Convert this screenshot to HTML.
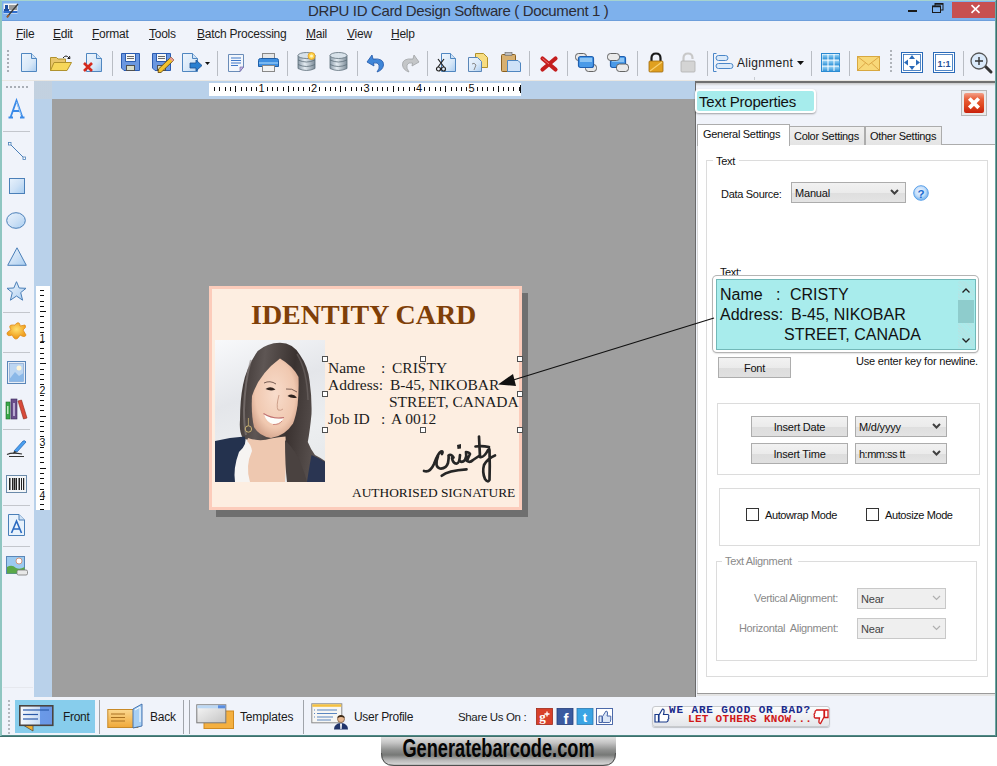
<!DOCTYPE html>
<html><head><meta charset="utf-8">
<style>
*{margin:0;padding:0;box-sizing:border-box}
html,body{width:997px;height:766px;overflow:hidden;background:#fff;font-family:"Liberation Sans",sans-serif;color:#000}
.a{position:absolute}
svg{position:absolute;overflow:visible}
.mi{position:absolute;top:28px;font-size:12px;line-height:12px;color:#1e1e1e;letter-spacing:-0.25px;white-space:pre}
.mi u{text-decoration:underline;text-underline-offset:1px}
.sep{position:absolute;top:51px;width:1px;height:25px;background:#b9bdc4}
.lsep{position:absolute;left:3px;width:27px;height:1px;background:#c3c6cc}
.handle{position:absolute;width:6px;height:6px;border:1px solid #505050;background:#fff}
.ct{position:absolute;font-family:"Liberation Serif",serif;font-size:15.5px;line-height:15px;color:#1c1c1c;white-space:pre}
.pt{position:absolute;font-size:11px;line-height:11px;color:#111;white-space:pre;margin-top:1px}
.btn{position:absolute;border:1px solid #adadad;background:linear-gradient(#f2f2f2 0%,#ebebeb 50%,#dddddd 51%,#e0e0e0 100%);font-size:11px;color:#111;text-align:center;letter-spacing:-0.2px;padding-top:1px}
.cmb{position:absolute;border:1px solid #acacac;background:linear-gradient(#f1f1f1 0%,#ebebeb 50%,#dedede 51%,#e4e4e4 100%);font-size:11px;color:#111;padding-left:3px;letter-spacing:-0.2px;padding-top:1px}
.grp{position:absolute;border:1px solid #dcdcdc}
.st{position:absolute;font-size:12px;line-height:12px;color:#1a1a1a;white-space:pre}
</style></head><body>
<!-- window frame -->
<div class="a" style="left:0;top:0;width:997px;height:737px;background:#f0f3fa;border-left:2px solid #8fc6c1;border-right:2px solid #6aa6a2;border-top:1px solid #a6d3cf;border-bottom:2px solid #4f8a86"></div>
<!-- title bar -->
<div class="a" style="left:2px;top:1px;width:993px;height:20px;background:#7eb1ec"></div>
<svg style="left:3px;top:3px" width="16" height="15" viewBox="0 0 16 15">
<rect x="0.5" y="0.5" width="14" height="10" fill="#f4f4f4"/>
<rect x="2" y="2" width="3" height="4" fill="#1f4fa0"/><rect x="1" y="6" width="5" height="2" fill="#1f4fa0"/>
<rect x="6" y="2" width="8" height="5" fill="#9a9a9a"/>
<rect x="0.5" y="8" width="14" height="2" fill="#2f6fd0"/>
<line x1="15" y1="1" x2="4" y2="14" stroke="#3a3a3a" stroke-width="1.3"/>
<line x1="6" y1="12" x2="4" y2="14.5" stroke="#a06030" stroke-width="2"/>
</svg>
<div class="a" style="left:308px;top:2px;font-size:15px;line-height:17px;letter-spacing:-0.36px;color:#2c2c34;white-space:pre">DRPU ID Card Design Software ( Document 1 )</div>
<div class="a" style="left:908px;top:10px;width:9px;height:2px;background:#1a1a1a"></div>
<svg style="left:932px;top:3px" width="12" height="10" viewBox="0 0 12 10"><rect x="3" y="0.5" width="8" height="6.5" fill="none" stroke="#1a1a1a" stroke-width="1"/><rect x="0.5" y="3" width="8" height="6.5" fill="#7eb1ec" stroke="#1a1a1a" stroke-width="1"/><line x1="0.5" y1="3.5" x2="8.5" y2="3.5" stroke="#1a1a1a" stroke-width="1.5"/><line x1="3" y1="1" x2="11" y2="1" stroke="#1a1a1a" stroke-width="1.5"/></svg>
<div class="a" style="left:952px;top:2px;width:43px;height:16px;background:#c75050"></div><div class="a" style="left:2px;top:20px;width:993px;height:1px;background:#6d9edb"></div>
<svg style="left:971px;top:5px" width="9" height="8" viewBox="0 0 9 8"><path d="M0.5 0.2 L8.5 7.8 M8.5 0.2 L0.5 7.8" stroke="#fff" stroke-width="1.6"/></svg>
<!-- menu -->
<div class="mi" style="left:16px"><u>F</u>ile</div>
<div class="mi" style="left:53px"><u>E</u>dit</div>
<div class="mi" style="left:92px"><u>F</u>ormat</div>
<div class="mi" style="left:149px"><u>T</u>ools</div>
<div class="mi" style="left:197px"><u>B</u>atch Processing</div>
<div class="mi" style="left:306px"><u>M</u>ail</div>
<div class="mi" style="left:347px"><u>V</u>iew</div>
<div class="mi" style="left:391px"><u>H</u>elp</div>
<!-- toolbar -->
<div class="a" style="left:2px;top:80px;width:993px;height:1px;background:#e8e6e2"></div>
<svg style="left:7px;top:50px" width="3" height="22"><g fill="#a9aeb6"><rect y="0" width="2" height="2"/><rect y="4" width="2" height="2"/><rect y="8" width="2" height="2"/><rect y="12" width="2" height="2"/><rect y="16" width="2" height="2"/><rect y="20" width="2" height="2"/></g></svg>
<!-- new doc -->
<svg style="left:21px;top:53px" width="17" height="19" viewBox="0 0 17 19"><defs><linearGradient id="gd" x1="0" y1="0" x2="1" y2="1"><stop offset="0" stop-color="#eef5fd"/><stop offset="0.6" stop-color="#d8e8f8"/><stop offset="1" stop-color="#a9cbef"/></linearGradient></defs><path d="M0.5 0.5 H10.5 L15.5 5.5 V18.5 H0.5 Z" fill="url(#gd)" stroke="#4f86c0"/><path d="M10.5 0.5 V5.5 H15.5" fill="#cfe2f6" stroke="#4f86c0"/></svg>
<!-- open -->
<svg style="left:50px;top:55px" width="23" height="17" viewBox="0 0 23 17"><path d="M0.5 2.5 H6.5 L8 4 H15.5 V15.5 H0.5 Z" fill="#e9c66a" stroke="#b0922e"/><path d="M0.5 15.5 L4 7.5 H21.5 L17 15.5 Z" fill="#f7d75a" stroke="#b0922e"/><path d="M13 3 Q16 -1 19 3" fill="none" stroke="#222" stroke-width="1"/><path d="M17.5 3.5 L20 3.5 L19.5 1" fill="none" stroke="#222" stroke-width="1"/></svg>
<!-- close doc -->
<svg style="left:83px;top:53px" width="20" height="19" viewBox="0 0 20 19"><path d="M3.5 0.5 H13.5 L18.5 5.5 V18.5 H3.5 Z" fill="url(#gd)" stroke="#4f86c0"/><path d="M13.5 0.5 V5.5 H18.5" fill="#cfe2f6" stroke="#4f86c0"/><path d="M1 10 L9 18 M9 10 L1 18" stroke="#d42a1e" stroke-width="2.6"/></svg>
<div class="sep" style="left:112px"></div>
<!-- save -->
<svg style="left:121px;top:53px" width="19" height="18" viewBox="0 0 19 18"><path d="M0.5 0.5 H18.5 V17.5 H3 L0.5 15 Z" fill="#6b97e0" stroke="#2b5cb0"/><rect x="5" y="1" width="9" height="7" fill="#f8f8f6"/><path d="M4.5 1 V8.5 H14.5 V1" fill="none" stroke="#2b5cb0" stroke-width="1"/><line x1="6" y1="3.5" x2="13" y2="3.5" stroke="#6a6a6a"/><line x1="6" y1="5.5" x2="13" y2="5.5" stroke="#6a6a6a"/><rect x="5.5" y="12.5" width="8" height="5" fill="#d8dcc8" stroke="#505050" stroke-width="1"/></svg>
<!-- save as -->
<svg style="left:152px;top:53px" width="23" height="20" viewBox="0 0 23 20"><path d="M0.5 0.5 H18.5 V17.5 H3 L0.5 15 Z" fill="#6b97e0" stroke="#2b5cb0"/><rect x="5" y="1" width="9" height="7" fill="#f8f8f6"/><path d="M4.5 1 V8.5 H14.5 V1" fill="none" stroke="#2b5cb0" stroke-width="1"/><line x1="6" y1="3.5" x2="13" y2="3.5" stroke="#6a6a6a"/><line x1="6" y1="5.5" x2="13" y2="5.5" stroke="#6a6a6a"/><rect x="5.5" y="12.5" width="8" height="5" fill="#d8dcc8" stroke="#505050" stroke-width="1"/><path d="M19 4 L22 7 L9 19.5 L6 19.5 L6.5 16 Z" fill="#f2c22e" stroke="#5a4010" stroke-width="0.8"/><path d="M19 4 L22 7 L20.5 8.5 L17.5 5.5 Z" fill="#e89a9a"/></svg>
<!-- export -->
<svg style="left:182px;top:53px" width="29" height="19" viewBox="0 0 29 19"><path d="M0.5 0.5 H10.5 L15.5 5.5 V18.5 H0.5 Z" fill="url(#gd)" stroke="#4f86c0"/><path d="M10.5 0.5 V5.5 H15.5" fill="#cfe2f6" stroke="#4f86c0"/><path d="M8 10 H14 V7 L20 12.5 L14 18 V15 H8 Z" fill="#2a7fd0" stroke="#1b4f90" stroke-width="0.8"/><path d="M23 9 H28 L25.5 12 Z" fill="#111"/></svg>
<div class="sep" style="left:217px"></div>
<!-- doc lines -->
<svg style="left:228px;top:54px" width="17" height="18" viewBox="0 0 17 18"><path d="M0.5 0.5 H15.5 V13 L12 17.5 H0.5 Z" fill="#f2f6fc" stroke="#6a8cb8"/><g stroke="#3e78c8" stroke-width="1"><line x1="3" y1="4" x2="13" y2="4"/><line x1="3" y1="6.5" x2="13" y2="6.5"/><line x1="3" y1="9" x2="13" y2="9"/><line x1="3" y1="11.5" x2="10" y2="11.5"/></g><path d="M15.5 13 L12 13 L12 17.5 Z" fill="#c9b8e6" stroke="#6a5aa0" stroke-width="0.6"/></svg>
<!-- printer -->
<svg style="left:258px;top:53px" width="21" height="19" viewBox="0 0 21 19"><rect x="4.5" y="0.5" width="12" height="6" fill="#e6e6e6" stroke="#888"/><path d="M0.5 7.5 Q0.5 5.5 2.5 5.5 H18.5 Q20.5 5.5 20.5 7.5 V13.5 H0.5 Z" fill="#3e8ee0" stroke="#1f5fa8"/><rect x="1" y="9" width="19" height="2" fill="#7ab8f0"/><rect x="4.5" y="12.5" width="12" height="6" fill="#f2f2f2" stroke="#888"/></svg>
<div class="sep" style="left:287px"></div>
<!-- db star -->
<svg style="left:297px;top:52px" width="20" height="20" viewBox="0 0 20 20"><defs><linearGradient id="gdb" x1="0" x2="1"><stop offset="0" stop-color="#8a9aa8"/><stop offset="0.4" stop-color="#e4ecf2"/><stop offset="1" stop-color="#7d8c98"/></linearGradient></defs><path d="M1 3.5 V16.5 Q9.5 20.5 18 16.5 V3.5" fill="url(#gdb)" stroke="#5e6e7a" stroke-width="0.8"/><ellipse cx="9.5" cy="3.5" rx="8.5" ry="3" fill="#d8e2ea" stroke="#5e6e7a" stroke-width="0.8"/><path d="M1 8 Q9.5 12 18 8 M1 12.5 Q9.5 16.5 18 12.5" fill="none" stroke="#5e6e7a" stroke-width="0.8"/><circle cx="14.5" cy="4" r="3.5" fill="#ffd34a" stroke="#e09a20" stroke-width="0.8"/><circle cx="14.5" cy="4" r="1.5" fill="#fff6c0"/></svg>
<!-- db -->
<svg style="left:329px;top:52px" width="20" height="20" viewBox="0 0 20 20"><path d="M1 3.5 V16.5 Q9.5 20.5 18 16.5 V3.5" fill="url(#gdb)" stroke="#5e6e7a" stroke-width="0.8"/><ellipse cx="9.5" cy="3.5" rx="8.5" ry="3" fill="#d8e2ea" stroke="#5e6e7a" stroke-width="0.8"/><path d="M1 8 Q9.5 12 18 8 M1 12.5 Q9.5 16.5 18 12.5" fill="none" stroke="#5e6e7a" stroke-width="0.8"/></svg>
<div class="sep" style="left:357px"></div>
<!-- undo -->
<svg style="left:366px;top:53px" width="20" height="20" viewBox="0 0 20 20"><path d="M1 9 L6 2 L7 6 Q18 5 17.5 12 Q17 17 11 19 Q14 15 13 12 Q12 9 7.5 10 L8 13 Z" fill="#3f86d8" stroke="#1f56a8" stroke-width="0.8"/></svg>
<!-- redo -->
<svg style="left:400px;top:53px" width="20" height="20" viewBox="0 0 20 20"><path d="M19 9 L14 2 L13 6 Q2 5 2.5 12 Q3 17 9 19 Q6 15 7 12 Q8 9 12.5 10 L12 13 Z" fill="#c4c6c8" stroke="#a0a2a4" stroke-width="0.8"/></svg>
<div class="sep" style="left:427px"></div>
<!-- cut -->
<svg style="left:436px;top:53px" width="21" height="19" viewBox="0 0 21 19"><path d="M5.5 0.5 H14.5 L19.5 5.5 V18.5 H5.5 Z" fill="url(#gd)" stroke="#4f86c0"/><path d="M14.5 0.5 V5.5 H19.5" fill="#cfe2f6" stroke="#4f86c0"/><path d="M2 6 L8 14 M8 6 L2 14" stroke="#222" stroke-width="1.2"/><circle cx="2.5" cy="16" r="2" fill="none" stroke="#222" stroke-width="1.2"/><circle cx="7.5" cy="16" r="2" fill="none" stroke="#222" stroke-width="1.2"/></svg>
<!-- copy -->
<svg style="left:468px;top:53px" width="21" height="19" viewBox="0 0 21 19"><path d="M7.5 0.5 H15.5 L19.5 4.5 V14.5 H7.5 Z" fill="#f7dc80" stroke="#b0902a"/><path d="M0.5 4.5 H9.5 L13.5 8.5 V18.5 H0.5 Z" fill="url(#gd)" stroke="#5a86b8"/><path d="M4 11 Q6 9 8 12 L6 17" fill="none" stroke="#888" stroke-width="1"/></svg>
<!-- paste -->
<svg style="left:501px;top:52px" width="20" height="20" viewBox="0 0 20 20"><rect x="0.5" y="2.5" width="14" height="17" rx="1" fill="#d8b070" stroke="#8a6020"/><rect x="4" y="0.5" width="7" height="3" fill="#bbb" stroke="#666" stroke-width="0.6"/><path d="M6.5 8.5 H17 L19.5 11 V19.5 H6.5 Z" fill="#cfe2f8" stroke="#4f86c0"/></svg>
<div class="sep" style="left:529px"></div>
<!-- delete -->
<svg style="left:540px;top:56px" width="18" height="16" viewBox="0 0 18 16"><path d="M2.5 2.5 L15.5 13.5 M15.5 2.5 L2.5 13.5" stroke="#c41e1e" stroke-width="4.2" stroke-linecap="round"/><path d="M2.5 2.5 L9 8" stroke="#f07070" stroke-width="1"/></svg>
<div class="sep" style="left:567px"></div>
<!-- bring front -->
<svg style="left:575px;top:53px" width="23" height="19" viewBox="0 0 23 19"><rect x="0.5" y="0.5" width="11" height="7" rx="3" fill="#e8e8e8" stroke="#555" stroke-width="0.9"/><rect x="10.5" y="11.5" width="11" height="7" rx="3" fill="#e8e8e8" stroke="#555" stroke-width="0.9"/><rect x="3.5" y="3.5" width="15" height="11" rx="2" fill="#4a9ae8" stroke="#1f5fb0" stroke-width="1.2"/><rect x="5" y="5" width="12" height="4" fill="#8cc4f4"/></svg>
<!-- send back -->
<svg style="left:607px;top:53px" width="23" height="19" viewBox="0 0 23 19"><rect x="3.5" y="3.5" width="15" height="11" rx="2" fill="#4a9ae8" stroke="#1f5fb0" stroke-width="1.2"/><rect x="5" y="5" width="12" height="4" fill="#8cc4f4"/><rect x="0.5" y="0.5" width="12" height="7" rx="3" fill="#eaeaea" stroke="#555" stroke-width="0.9"/><rect x="9.5" y="11" width="12" height="7.5" rx="3" fill="#eaeaea" stroke="#555" stroke-width="0.9"/></svg>
<div class="sep" style="left:637px"></div>
<!-- lock -->
<svg style="left:648px;top:52px" width="16" height="21" viewBox="0 0 16 21"><path d="M3.5 9 V6 Q3.5 1.5 8 1.5 Q12.5 1.5 12.5 6 V9" fill="none" stroke="#1a1a1a" stroke-width="2.2"/><rect x="1" y="9" width="14" height="11" rx="1" fill="#e0a020" stroke="#a06a10" stroke-width="0.8"/><path d="M2 19 L14 10" stroke="#f8d070" stroke-width="1.2"/></svg>
<!-- unlock -->
<svg style="left:680px;top:52px" width="16" height="21" viewBox="0 0 16 21"><path d="M3.5 9 V6 Q3.5 1.5 8 1.5 Q12.5 1.5 12.5 6 V7" fill="none" stroke="#c8c8c8" stroke-width="2.2"/><rect x="1" y="9" width="14" height="11" rx="1" fill="#d4d4d4" stroke="#b0b0b0" stroke-width="0.8"/></svg>
<div class="sep" style="left:707px"></div>
<!-- alignment -->
<svg style="left:713px;top:53px" width="21" height="19" viewBox="0 0 21 19"><path d="M3.5 0.5 H0.5 V18.5 H3.5" fill="none" stroke="#4a86c8" stroke-width="1"/><rect x="3" y="2.5" width="12" height="5" rx="2.5" fill="#dbeafa" stroke="#4a86c8"/><rect x="3" y="10.5" width="17" height="5" rx="2.5" fill="#dbeafa" stroke="#4a86c8"/></svg>
<div class="a" style="left:737px;top:57px;font-size:12px;line-height:13px;color:#1a1a1a;letter-spacing:0.3px">Alignment</div>
<svg style="left:797px;top:61px" width="7" height="4"><path d="M0 0 H7 L3.5 4 Z" fill="#111"/></svg>
<div class="a" style="left:754px;top:77px;width:1px;height:3px;background:#c8ccd2"></div>
<div class="sep" style="left:811px"></div>
<!-- grid -->
<svg style="left:821px;top:53px" width="19" height="19" viewBox="0 0 19 19"><defs><linearGradient id="gg" x1="0" y1="0" x2="0" y2="1"><stop offset="0" stop-color="#9ad4f6"/><stop offset="1" stop-color="#2a90d8"/></linearGradient></defs><rect x="0.5" y="0.5" width="18" height="18" fill="#fff" stroke="#2a88d0"/><g fill="url(#gg)"><rect x="1.5" y="1.5" width="5" height="5"/><rect x="7.5" y="1.5" width="5" height="5"/><rect x="13.5" y="1.5" width="5" height="5"/><rect x="1.5" y="7.5" width="5" height="5"/><rect x="7.5" y="7.5" width="5" height="5"/><rect x="13.5" y="7.5" width="5" height="5"/><rect x="1.5" y="13.5" width="5" height="5"/><rect x="7.5" y="13.5" width="5" height="5"/><rect x="13.5" y="13.5" width="5" height="5"/></g></svg>
<div class="sep" style="left:849px"></div>
<!-- envelope -->
<svg style="left:857px;top:56px" width="23" height="15" viewBox="0 0 23 15"><rect x="0.5" y="0.5" width="22" height="14" fill="#f8d878" stroke="#d8a840"/><path d="M0.5 0.5 L11.5 9 L22.5 0.5 M0.5 14.5 L8.5 7 M22.5 14.5 L14.5 7" fill="none" stroke="#d8a040" stroke-width="0.9"/></svg>
<svg style="left:890px;top:50px" width="3" height="25"><g fill="#b0b4ba"><rect y="0" width="2" height="2"/><rect y="4" width="2" height="2"/><rect y="8" width="2" height="2"/><rect y="12" width="2" height="2"/><rect y="16" width="2" height="2"/><rect y="20" width="2" height="2"/></g></svg>
<!-- fit -->
<svg style="left:901px;top:52px" width="22" height="21" viewBox="0 0 22 21"><rect x="0.5" y="0.5" width="21" height="20" fill="#fff" stroke="#2a6ab8"/><rect x="2.5" y="2.5" width="17" height="16" fill="none" stroke="#2a6ab8" stroke-width="0.8"/><path d="M11 3 L14 7 H8 Z M11 18 L14 14 H8 Z M3 10.5 L7 7.5 V13.5 Z M19 10.5 L15 7.5 V13.5 Z" fill="#2a6ab8"/></svg>
<!-- 1:1 -->
<svg style="left:933px;top:52px" width="22" height="21" viewBox="0 0 22 21"><rect x="0.5" y="0.5" width="21" height="20" fill="#fff" stroke="#2a6ab8"/><rect x="2.5" y="2.5" width="17" height="16" fill="none" stroke="#2a6ab8" stroke-width="0.8"/><text x="11" y="14.5" font-family="Liberation Sans" font-weight="bold" font-size="9" fill="#1f4f98" text-anchor="middle">1:1</text></svg>
<div class="sep" style="left:963px"></div>
<!-- zoom -->
<svg style="left:970px;top:52px" width="24" height="22" viewBox="0 0 24 22"><line x1="14" y1="13" x2="21" y2="20" stroke="#333" stroke-width="3" stroke-linecap="round"/><circle cx="9" cy="9" r="8" fill="#dbeafa" stroke="#555" stroke-width="1.3"/><path d="M9 5 V13 M5 9 H13" stroke="#333" stroke-width="1.4"/></svg>
<!-- ruler row & strips -->
<div class="a" style="left:34px;top:81px;width:661px;height:18px;background:#b9d1ea"></div>
<div class="a" style="left:34px;top:81px;width:18px;height:616px;background:#b9d1ea"></div>
<div class="a" style="left:34px;top:81px;width:18px;height:18px;background:radial-gradient(circle,#a8b8c8 0.5px,#dbe8f6 0.9px) 0 0/2px 2px"></div>
<div class="a" style="left:2px;top:81px;width:32px;height:616px;background:#f0f3fa"></div>
<svg style="left:6px;top:86px" width="24" height="3"><g fill="#a9aeb6"><rect x="0" width="2" height="2"/><rect x="4" width="2" height="2"/><rect x="8" width="2" height="2"/><rect x="12" width="2" height="2"/><rect x="16" width="2" height="2"/><rect x="20" width="2" height="2"/></g></svg>
<!-- h ruler -->
<div class="a" style="left:209px;top:83px;width:312px;height:13px;background:#fff"></div><svg style="left:209px;top:83px" width="312" height="13" viewBox="0 0 312 13"><rect x="5" y="4" width="1" height="4" fill="#111"/><rect x="10" y="4" width="1" height="4" fill="#111"/><rect x="16" y="4" width="1" height="4" fill="#111"/><rect x="21" y="4" width="1" height="4" fill="#111"/><rect x="26" y="3" width="1" height="6" fill="#111"/><rect x="32" y="4" width="1" height="4" fill="#111"/><rect x="37" y="4" width="1" height="4" fill="#111"/><rect x="42" y="4" width="1" height="4" fill="#111"/><rect x="47" y="4" width="1" height="4" fill="#111"/><rect x="58" y="4" width="1" height="4" fill="#111"/><rect x="63" y="4" width="1" height="4" fill="#111"/><rect x="68" y="4" width="1" height="4" fill="#111"/><rect x="74" y="4" width="1" height="4" fill="#111"/><rect x="79" y="3" width="1" height="6" fill="#111"/><rect x="84" y="4" width="1" height="4" fill="#111"/><rect x="89" y="4" width="1" height="4" fill="#111"/><rect x="94" y="4" width="1" height="4" fill="#111"/><rect x="100" y="4" width="1" height="4" fill="#111"/><rect x="110" y="4" width="1" height="4" fill="#111"/><rect x="116" y="4" width="1" height="4" fill="#111"/><rect x="121" y="4" width="1" height="4" fill="#111"/><rect x="126" y="4" width="1" height="4" fill="#111"/><rect x="131" y="3" width="1" height="6" fill="#111"/><rect x="136" y="4" width="1" height="4" fill="#111"/><rect x="142" y="4" width="1" height="4" fill="#111"/><rect x="147" y="4" width="1" height="4" fill="#111"/><rect x="152" y="4" width="1" height="4" fill="#111"/><rect x="163" y="4" width="1" height="4" fill="#111"/><rect x="168" y="4" width="1" height="4" fill="#111"/><rect x="173" y="4" width="1" height="4" fill="#111"/><rect x="178" y="4" width="1" height="4" fill="#111"/><rect x="184" y="3" width="1" height="6" fill="#111"/><rect x="189" y="4" width="1" height="4" fill="#111"/><rect x="194" y="4" width="1" height="4" fill="#111"/><rect x="200" y="4" width="1" height="4" fill="#111"/><rect x="205" y="4" width="1" height="4" fill="#111"/><rect x="215" y="4" width="1" height="4" fill="#111"/><rect x="220" y="4" width="1" height="4" fill="#111"/><rect x="226" y="4" width="1" height="4" fill="#111"/><rect x="231" y="4" width="1" height="4" fill="#111"/><rect x="236" y="3" width="1" height="6" fill="#111"/><rect x="242" y="4" width="1" height="4" fill="#111"/><rect x="247" y="4" width="1" height="4" fill="#111"/><rect x="252" y="4" width="1" height="4" fill="#111"/><rect x="257" y="4" width="1" height="4" fill="#111"/><rect x="268" y="4" width="1" height="4" fill="#111"/><rect x="273" y="4" width="1" height="4" fill="#111"/><rect x="278" y="4" width="1" height="4" fill="#111"/><rect x="284" y="4" width="1" height="4" fill="#111"/><rect x="289" y="3" width="1" height="6" fill="#111"/><rect x="294" y="4" width="1" height="4" fill="#111"/><rect x="299" y="4" width="1" height="4" fill="#111"/><rect x="304" y="4" width="1" height="4" fill="#111"/><rect x="310" y="4" width="1" height="4" fill="#111"/><rect x="311" y="2" width="1" height="8" fill="#111"/><text x="49.5" y="8.7" font-family="Liberation Sans" font-size="11" fill="#111">1</text><text x="102.0" y="8.7" font-family="Liberation Sans" font-size="11" fill="#111">2</text><text x="154.5" y="8.7" font-family="Liberation Sans" font-size="11" fill="#111">3</text><text x="207.0" y="8.7" font-family="Liberation Sans" font-size="11" fill="#111">4</text><text x="259.5" y="8.7" font-family="Liberation Sans" font-size="11" fill="#111">5</text></svg>
<!-- v ruler -->
<div class="a" style="left:36px;top:286px;width:14px;height:224px;background:#fff"></div><svg style="left:36px;top:286px" width="14" height="224" viewBox="0 0 14 224"><rect x="4" y="4" width="4" height="1" fill="#111"/><rect x="4" y="9" width="4" height="1" fill="#111"/><rect x="4" y="15" width="4" height="1" fill="#111"/><rect x="4" y="20" width="4" height="1" fill="#111"/><rect x="4" y="25" width="6" height="1" fill="#111"/><rect x="4" y="30" width="4" height="1" fill="#111"/><rect x="4" y="36" width="4" height="1" fill="#111"/><rect x="4" y="41" width="4" height="1" fill="#111"/><rect x="4" y="46" width="4" height="1" fill="#111"/><rect x="4" y="56" width="4" height="1" fill="#111"/><rect x="4" y="62" width="4" height="1" fill="#111"/><rect x="4" y="67" width="4" height="1" fill="#111"/><rect x="4" y="72" width="4" height="1" fill="#111"/><rect x="4" y="77" width="6" height="1" fill="#111"/><rect x="4" y="83" width="4" height="1" fill="#111"/><rect x="4" y="88" width="4" height="1" fill="#111"/><rect x="4" y="93" width="4" height="1" fill="#111"/><rect x="4" y="98" width="4" height="1" fill="#111"/><rect x="4" y="109" width="4" height="1" fill="#111"/><rect x="4" y="114" width="4" height="1" fill="#111"/><rect x="4" y="119" width="4" height="1" fill="#111"/><rect x="4" y="124" width="4" height="1" fill="#111"/><rect x="4" y="130" width="6" height="1" fill="#111"/><rect x="4" y="135" width="4" height="1" fill="#111"/><rect x="4" y="140" width="4" height="1" fill="#111"/><rect x="4" y="145" width="4" height="1" fill="#111"/><rect x="4" y="150" width="4" height="1" fill="#111"/><rect x="4" y="161" width="4" height="1" fill="#111"/><rect x="4" y="166" width="4" height="1" fill="#111"/><rect x="4" y="171" width="4" height="1" fill="#111"/><rect x="4" y="176" width="4" height="1" fill="#111"/><rect x="4" y="182" width="6" height="1" fill="#111"/><rect x="4" y="187" width="4" height="1" fill="#111"/><rect x="4" y="192" width="4" height="1" fill="#111"/><rect x="4" y="197" width="4" height="1" fill="#111"/><rect x="4" y="203" width="4" height="1" fill="#111"/><rect x="4" y="213" width="4" height="1" fill="#111"/><rect x="4" y="218" width="4" height="1" fill="#111"/><rect x="4" y="223" width="4" height="1" fill="#111"/><text x="3.5" y="56.0" font-family="Liberation Sans" font-size="10.5" fill="#111">1</text><text x="3.5" y="108.2" font-family="Liberation Sans" font-size="10.5" fill="#111">2</text><text x="3.5" y="160.4" font-family="Liberation Sans" font-size="10.5" fill="#111">3</text><text x="3.5" y="212.6" font-family="Liberation Sans" font-size="10.5" fill="#111">4</text></svg>
<!-- canvas -->
<div class="a" style="left:52px;top:99px;width:643px;height:598px;background:#9f9f9f"></div>
<div class="a" style="left:695px;top:81px;width:1px;height:616px;background:#6a6a6a"></div>
<!-- left tools -->
<div class="lsep" style="top:131px"></div>
<div class="lsep" style="top:312px"></div>
<div class="lsep" style="top:352px"></div>
<div class="lsep" style="top:429px"></div>
<div class="lsep" style="top:505px"></div>
<div class="lsep" style="top:546px"></div>
<div class="a" style="left:3px;top:687px;width:30px;height:1px;background:#e6e8ee"></div>
<svg style="left:8px;top:100px" width="17" height="18" viewBox="0 0 17 18"><path d="M0.5 17.5 H5 M12 17.5 H16.5 M2.5 17.5 L8.5 0.5 L14.5 17.5 M5 11 H12" fill="none" stroke="#3a8ae8" stroke-width="1.8"/><path d="M8.5 2 L13 15" stroke="#9cc8f4" stroke-width="1"/></svg>
<svg style="left:8px;top:142px" width="18" height="18" viewBox="0 0 18 18"><line x1="1.5" y1="1.5" x2="16" y2="16" stroke="#4a7fb8" stroke-width="1"/><rect x="0.5" y="0.5" width="2.5" height="2.5" fill="#fff" stroke="#4a7fb8" stroke-width="0.8"/><rect x="15" y="15" width="2.5" height="2.5" fill="#fff" stroke="#4a7fb8" stroke-width="0.8"/></svg>
<svg style="left:9px;top:178px" width="16" height="16" viewBox="0 0 16 16"><defs><linearGradient id="gl" x1="0" y1="0" x2="1" y2="1"><stop offset="0" stop-color="#e8f2fc"/><stop offset="0.5" stop-color="#cfe2f6"/><stop offset="1" stop-color="#a8cdf0"/></linearGradient></defs><rect x="0.5" y="0.5" width="15" height="15" fill="url(#gl)" stroke="#4a7fb8"/></svg>
<svg style="left:6px;top:212px" width="20" height="17" viewBox="0 0 20 17"><ellipse cx="10" cy="8.5" rx="9.3" ry="7.8" fill="url(#gl)" stroke="#4a7fb8"/></svg>
<svg style="left:7px;top:247px" width="20" height="19" viewBox="0 0 20 19"><path d="M10 0.8 L19.3 18.3 H0.7 Z" fill="url(#gl)" stroke="#4a7fb8"/></svg>
<svg style="left:6px;top:281px" width="21" height="20" viewBox="0 0 21 20"><path d="M10.5 0.7 L13.2 7 L20 7.3 L14.7 11.6 L16.6 19.2 L10.5 15 L4.4 19.2 L6.3 11.6 L1 7.3 L7.8 7 Z" fill="url(#gl)" stroke="#4a7fb8"/></svg>
<svg style="left:6px;top:322px" width="21" height="19" viewBox="0 0 21 19"><defs><radialGradient id="go" cx="0.5" cy="0.4"><stop offset="0" stop-color="#ffe070"/><stop offset="1" stop-color="#f0a020"/></radialGradient></defs><path d="M11 1 Q14 0 14 4 L19 3 Q21 5 17 8 L20 13 Q19 16 14 13 Q11 19 8 16 L6 13 Q1 15 1 11 Q2 9 5 8 Q2 3 6 3 Q9 4 11 1 Z" fill="url(#go)" stroke="#e08a18" stroke-width="0.8"/></svg>
<svg style="left:7px;top:361px" width="19" height="23" viewBox="0 0 19 23"><rect x="0.5" y="0.5" width="18" height="22" fill="#e8eef6" stroke="#5a86b8"/><rect x="2.5" y="2.5" width="14" height="18" fill="#bcd6f2" stroke="#7a9cc8" stroke-width="0.6"/><circle cx="12" cy="7" r="2.5" fill="#fff6d8"/><path d="M2.5 18 L8 11 L12 15 L16.5 12 V20.5 H2.5 Z" fill="#8ab8e8"/></svg>
<svg style="left:5px;top:398px" width="23" height="22" viewBox="0 0 23 22"><rect x="1" y="4" width="4" height="17" fill="#3aa848" stroke="#1e6a28" stroke-width="0.6"/><rect x="6" y="1" width="6" height="20" fill="#6a4e8a" stroke="#3a2a5a" stroke-width="0.6"/><path d="M13 3 L16.5 2 L22 20 L18.5 21 Z" fill="#d84a3a" stroke="#8a2a1a" stroke-width="0.6"/><rect x="2" y="8" width="1.5" height="8" fill="#bfe8c0"/><rect x="8" y="5" width="2" height="13" fill="#b8a8d0"/></svg>
<svg style="left:6px;top:439px" width="21" height="19" viewBox="0 0 21 19"><path d="M8 12 L17 2 Q19 1 20 3 L11 13 Z" fill="#4aa0f0" stroke="#1f5fb0" stroke-width="0.7"/><path d="M8 12 L11 13 L7 15 Z" fill="#333"/><path d="M1 15.5 Q6 13 16 15 M3 17.5 H18" fill="none" stroke="#333" stroke-width="1.2"/></svg>
<svg style="left:6px;top:475px" width="21" height="18" viewBox="0 0 21 18"><rect x="0.5" y="0.5" width="20" height="17" fill="#f4f6f8" stroke="#6a8aaa"/><g fill="#222"><rect x="3" y="3" width="1.5" height="12"/><rect x="6" y="3" width="1" height="12"/><rect x="7.5" y="3" width="2" height="12"/><rect x="10" y="3" width="1" height="12"/><rect x="12.5" y="3" width="1.5" height="12"/><rect x="15" y="3" width="1" height="12"/><rect x="17" y="3" width="1.2" height="12"/></g></svg>
<svg style="left:8px;top:514px" width="17" height="22" viewBox="0 0 17 22"><path d="M0.5 0.5 H11 L16.5 6 V21.5 H0.5 Z" fill="#e8f2fc" stroke="#4a7fb8"/><path d="M11 0.5 V6 H16.5" fill="#cfe2f6" stroke="#4a7fb8"/><path d="M3.5 19 L8.5 7 L13.5 19 M5.5 15 H11.5" fill="none" stroke="#2a6ac0" stroke-width="1.6"/></svg>
<svg style="left:6px;top:556px" width="22" height="22" viewBox="0 0 22 22"><rect x="0.5" y="0.5" width="18" height="17" fill="#9ccaf0" stroke="#5a86b8"/><path d="M1 17.5 V11 Q6 8 10 12 Q14 14 18.5 11 V17.5 Z" fill="#5aa848"/><circle cx="13" cy="5" r="3" fill="#fff" stroke="#d08060" stroke-width="0.8"/><rect x="11" y="14" width="10.5" height="5" rx="1.5" fill="#e8e8e8" stroke="#777" stroke-width="0.8"/></svg>
<!-- card shadow & card -->
<div class="a" style="left:216px;top:293px;width:312px;height:224px;background:#6f6f6f"></div>
<div class="a" style="left:209px;top:286px;width:313px;height:224px;background:#fdeee1;border:3px solid #fcccbb"></div>
<div class="a" style="left:251px;top:300px;font-family:'Liberation Serif',serif;font-weight:bold;font-size:28px;line-height:30px;color:#7f3f08;letter-spacing:0px;white-space:pre">IDENTITY CARD</div>
<!-- photo -->
<svg style="left:215px;top:340px" width="110" height="142" viewBox="0 0 110 142">
<defs>
<linearGradient id="pbg" x1="0" y1="0" x2="0.3" y2="1"><stop offset="0" stop-color="#f8f9fb"/><stop offset="0.45" stop-color="#e4e6ea"/><stop offset="0.8" stop-color="#eceef0"/><stop offset="1" stop-color="#e8eaec"/></linearGradient>
<linearGradient id="hair" x1="0" y1="0" x2="1" y2="0.2"><stop offset="0" stop-color="#3a3230"/><stop offset="0.3" stop-color="#5e5654"/><stop offset="0.65" stop-color="#3a3230"/><stop offset="1" stop-color="#5a5250"/></linearGradient>
<radialGradient id="skin" cx="0.5" cy="0.45" r="0.6"><stop offset="0" stop-color="#f8dccb"/><stop offset="0.7" stop-color="#f0c8b0"/><stop offset="1" stop-color="#d0a088"/></radialGradient>
</defs>
<rect width="110" height="142" fill="url(#pbg)"/>
<path d="M65 2.8 Q78 3 85 15 Q93 26 94.6 41 Q97 58 96.5 74 Q95 90 92.8 102 Q96 110 100 115 Q106 118 110 121 V142 H89 Q84 128 78 118 Q60 104 40 100 Q30 100 27.8 98 Q24 92 25 80 Q25 60 28 45 Q31 28 42.7 11 Q52 3 65 2.8 Z" fill="url(#hair)"/>
<path d="M37 56 Q44 34 65 18.5 Q78 26 83.5 37 Q84 52 82.6 65 Q81 76 78 83.5 Q70 96 56 98 Q44 96 39 87 Q36 74 37 56 Z" fill="url(#skin)"/>
<path d="M33 98 Q45 102 56 98.5 Q64 97 70.5 96.5 Q72 115 70 142 H22 Q26 120 33 98 Z" fill="#eec8b0"/>
<path d="M20 111 L31 100 Q36 104 37 111 Q30 126 35 142 H18 Z" fill="#f6f4f2"/>
<path d="M0 101 Q15 97 29.7 96.5 Q33 104 24 112 Q18 128 20 142 H0 Z" fill="#24324e"/>
<path d="M96.5 115 Q104 118 110 122 V142 H92 Q94 128 96.5 115 Z" fill="#2a3552"/>
<path d="M70 100 Q82 112 86 124 Q90 134 92 142 H72 Q70 126 70 100 Z" fill="#4a4240"/>
<path d="M49 74 Q58 80 68.6 78 Q66 84 58 84 Q51 82 49 74 Z" fill="#fdfdfb"/>
<path d="M48.5 73.5 Q58 79.5 69 77.5" fill="none" stroke="#c07070" stroke-width="1.2"/>
<path d="M58 84.5 Q64 85 67 81" fill="none" stroke="#d08a80" stroke-width="1"/>
<path d="M50.5 49 Q55.5 45.5 60.5 49.5 Q55.5 51.5 50.5 49 Z" fill="#2e221e"/>
<path d="M72.5 56 Q77.5 52.5 82 57.5 Q77 59 72.5 56 Z" fill="#2e221e"/>
<path d="M49 43 Q55 40 61 44 M71 49 Q77 48 82 52" fill="none" stroke="#6a5048" stroke-width="0.9"/>
<path d="M64 55 Q61 66 63 70 Q66 71 68 69" fill="none" stroke="#c89a84" stroke-width="0.9"/><path d="M36 20 Q30 40 29 70 Q29 85 31 95" fill="none" stroke="#8a8280" stroke-width="2" opacity="0.6"/><path d="M82 14 Q92 30 93 60" fill="none" stroke="#7a7270" stroke-width="1.5" opacity="0.5"/>
<circle cx="33.4" cy="89" r="3.2" fill="none" stroke="#c8b070" stroke-width="1"/>
<path d="M33.4 78 V85.8" stroke="#c8b070" stroke-width="0.8"/>
</svg>
<!-- text -->
<div class="ct" style="left:328px;top:360px">Name</div>
<div class="ct" style="left:381px;top:360px">:</div>
<div class="ct" style="left:392px;top:360px">CRISTY</div>
<div class="ct" style="left:328px;top:377px">Address:</div>
<div class="ct" style="left:390px;top:377px">B-45, NIKOBAR</div>
<div class="ct" style="left:389px;top:394px">STREET, CANADA</div>
<div class="ct" style="left:328px;top:411px">Job ID</div>
<div class="ct" style="left:381px;top:411px">:</div>
<div class="ct" style="left:391px;top:411px">A 0012</div>
<div class="a" style="left:352px;top:486px;font-family:'Liberation Serif',serif;font-size:13.4px;line-height:14px;color:#141414;white-space:pre">AUTHORISED SIGNATURE</div>
<!-- handles -->
<div class="handle" style="left:322px;top:356px"></div>
<div class="handle" style="left:420px;top:356px"></div>
<div class="handle" style="left:517px;top:356px"></div>
<div class="handle" style="left:322px;top:391px"></div>
<div class="handle" style="left:517px;top:391px"></div>
<div class="handle" style="left:322px;top:427px"></div>
<div class="handle" style="left:420px;top:427px"></div>
<div class="handle" style="left:517px;top:427px"></div>
<!-- signature -->
<svg style="left:420px;top:430px" width="80" height="60" viewBox="0 0 80 60"><g fill="none" stroke="#262626" stroke-width="2.7" stroke-linecap="round" stroke-linejoin="round">
<path d="M4 41 Q10 43 14 34 Q18 23 21 21.5 Q23.5 21 22 24"/>
<path d="M18 26 Q14 37 20 38.5 Q26 39 28 33 Q29 27 28.5 25.5 Q31 23.5 33.5 27.5"/>
<path d="M32 28 Q33 34 37 33.5 Q39.5 33 40 25"/>
<path d="M40 31 Q42 33 45 30 Q47 26 46 22 Q49 22 50 24 Q48 28 47 31 Q50 33 53 30 Q56 28 59 26"/>
<path d="M59 6.5 Q59.5 16 60 27"/>
<path d="M55.5 16.5 Q62 15.5 69 17"/>
<path d="M60 27 Q64 28 68 20 Q69.5 18 69.5 20 Q70 36 69.5 50 Q68 53 65 49 Q62 42 64 35 Q68 28 75 25.5"/>
<path d="M21.7 45.7 Q28 40.5 46.5 39.3"/>
</g><path d="M37 15 L41 14 L41 18.5 L37.5 19 Z" fill="#262626"/></svg>
<!-- right panel -->
<div class="a" style="left:696px;top:81px;width:299px;height:616px;background:#f0f3fa"></div>
<div class="a" style="left:696px;top:81px;width:299px;height:2px;background:#707070"></div>
<div class="a" style="left:696px;top:83px;width:299px;height:3px;background:linear-gradient(#c8c8c8,#f0f3fa)"></div>
<div class="a" style="left:695px;top:89px;width:121px;height:24px;background:#a6ecec;border:2px solid #fff;border-radius:4px;box-shadow:0 1px 2px rgba(0,0,0,0.35)"></div>
<div class="a" style="left:699px;top:93px;font-size:15px;line-height:17px;color:#111;letter-spacing:-0.2px;white-space:pre">Text Properties</div>
<div class="a" style="left:961px;top:90px;width:26px;height:26px;border:1px solid #b8b8b8;background:#eaeaea"></div>
<div class="a" style="left:964px;top:93px;width:20px;height:20px;border-radius:2px;background:linear-gradient(#f4a088 0%,#e8603a 30%,#e04a20 60%,#c8200c 100%)"></div>
<svg style="left:967px;top:96px" width="14" height="14" viewBox="0 0 14 14"><path d="M2.3 2.5 L11.7 11.8 M11.7 2.5 L2.3 11.8" stroke="#fff" stroke-width="3.8"/></svg>
<!-- tab content area -->
<div class="a" style="left:697px;top:144px;width:298px;height:550px;background:#fff;border-top:1px solid #acacac"></div>
<div class="a" style="left:697px;top:144px;width:1px;height:549px;background:#d8d8d8"></div>
<div class="a" style="left:697px;top:693px;width:298px;height:1px;background:#9a9a9a"></div>
<div class="a" style="left:697px;top:694px;width:298px;height:2px;background:#e4e4e4"></div>
<div class="a" style="left:789px;top:126px;width:76px;height:19px;background:linear-gradient(#f0f0f0,#e4e4e4);border:1px solid #acacac;border-bottom:none"></div>
<div class="a" style="left:865px;top:126px;width:77px;height:19px;background:linear-gradient(#f0f0f0,#e4e4e4);border:1px solid #acacac;border-bottom:none"></div>
<div class="a" style="left:697px;top:124px;width:93px;height:22px;background:#fff;border:1px solid #acacac;border-bottom:none"></div>
<div class="pt" style="left:703px;top:128px;letter-spacing:-0.3px">General Settings</div>
<div class="pt" style="left:794px;top:130px;letter-spacing:-0.3px">Color Settings</div>
<div class="pt" style="left:870px;top:130px;letter-spacing:-0.3px">Other Settings</div>
<!-- group Text -->
<div class="grp" style="left:706px;top:160px;width:282px;height:517px"></div>
<div class="a" style="left:713px;top:153px;width:26px;height:12px;background:#fff"></div>
<div class="pt" style="left:716px;top:155px;letter-spacing:-0.3px">Text</div>
<div class="pt" style="left:721px;top:188px;letter-spacing:-0.3px">Data Source:</div>
<div class="cmb" style="left:791px;top:182px;width:115px;height:21px;line-height:19px">Manual</div>
<svg style="left:890px;top:189px" width="9" height="6"><path d="M1 1 L4.5 4.5 L8 1" fill="none" stroke="#404040" stroke-width="2"/></svg>
<svg style="left:913px;top:185px" width="16" height="16" viewBox="0 0 16 16"><defs><radialGradient id="gq" cx="0.45" cy="0.4"><stop offset="0" stop-color="#f0f7fe"/><stop offset="0.7" stop-color="#c4defa"/><stop offset="1" stop-color="#8cc0f0"/></radialGradient></defs><circle cx="8" cy="8" r="7.3" fill="url(#gq)" stroke="#5aa0ea" stroke-width="1"/><text x="8" y="12.5" font-family="Liberation Sans" font-weight="bold" font-size="11.5" fill="#1a6ad0" text-anchor="middle">?</text></svg>
<div class="pt" style="left:720px;top:266px;letter-spacing:-0.4px">Text:</div>
<!-- textbox -->
<div class="a" style="left:713px;top:276px;width:265px;height:76px;background:#fff;border-radius:4px;box-shadow:0 0 0 1px #b4b4b4,0 1px 2px rgba(0,0,0,0.35)"></div>
<div class="a" style="left:716px;top:279px;width:260px;height:71px;background:#a8ecec;border:1px solid #72b8b8"></div>
<div class="a" style="left:720px;top:285px;font-size:16px;line-height:20px;color:#111;white-space:pre">Name</div>
<div class="a" style="left:776px;top:285px;font-size:16px;line-height:20px;color:#111;white-space:pre">:</div>
<div class="a" style="left:790px;top:285px;font-size:16px;line-height:20px;color:#111;white-space:pre">CRISTY</div>
<div class="a" style="left:720px;top:305px;font-size:16px;line-height:20px;color:#111;white-space:pre">Address:</div>
<div class="a" style="left:791px;top:305px;font-size:16px;line-height:20px;color:#111;white-space:pre">B-45, NIKOBAR</div>
<div class="a" style="left:784px;top:325px;font-size:16px;line-height:20px;color:#111;white-space:pre">STREET, CANADA</div>
<div class="a" style="left:958px;top:281px;width:16px;height:67px;background:repeating-linear-gradient(45deg,#b4e4e4 0 1px,#a8ecec 1px 2px)"></div>
<div class="a" style="left:958px;top:300px;width:16px;height:23px;background:#8ecccc"></div>
<svg style="left:962px;top:288px" width="8" height="5"><path d="M0.5 4.5 L4 1 L7.5 4.5" fill="none" stroke="#222" stroke-width="1.3"/></svg>
<svg style="left:962px;top:338px" width="8" height="5"><path d="M0.5 0.5 L4 4 L7.5 0.5" fill="none" stroke="#222" stroke-width="1.3"/></svg>
<div class="btn" style="left:718px;top:357px;width:73px;height:21px;line-height:19px">Font</div>
<div class="pt" style="left:856px;top:355px;letter-spacing:-0.2px">Use enter key for newline.</div>
<!-- date/time group -->
<div class="grp" style="left:717px;top:403px;width:263px;height:72px"></div>
<div class="btn" style="left:751px;top:416px;width:97px;height:21px;line-height:19px">Insert Date</div>
<div class="cmb" style="left:855px;top:416px;width:92px;height:21px;line-height:19px">M/d/yyyy</div>
<svg style="left:932px;top:423px" width="9" height="6"><path d="M1 1 L4.5 4.5 L8 1" fill="none" stroke="#404040" stroke-width="2"/></svg>
<div class="btn" style="left:751px;top:443px;width:97px;height:21px;line-height:19px">Insert Time</div>
<div class="cmb" style="left:855px;top:443px;width:92px;height:21px;line-height:19px;letter-spacing:-0.5px">h:mm:ss tt</div>
<svg style="left:932px;top:450px" width="9" height="6"><path d="M1 1 L4.5 4.5 L8 1" fill="none" stroke="#404040" stroke-width="2"/></svg>
<!-- modes -->
<div class="grp" style="left:719px;top:488px;width:261px;height:58px"></div>
<div class="a" style="left:746px;top:508px;width:13px;height:13px;border:1px solid #333;background:#fff"></div>
<div class="pt" style="left:765px;top:509px;letter-spacing:-0.4px">Autowrap Mode</div>
<div class="a" style="left:866px;top:508px;width:13px;height:13px;border:1px solid #333;background:#fff"></div>
<div class="pt" style="left:885px;top:509px;letter-spacing:-0.4px">Autosize Mode</div>
<!-- alignment -->
<div class="grp" style="left:716px;top:561px;width:261px;height:100px"></div>
<div class="a" style="left:722px;top:554px;width:76px;height:12px;background:#fff"></div>
<div class="pt" style="left:725px;top:555px;color:#8a8a8a;letter-spacing:-0.35px">Text Alignment</div>
<div class="pt" style="left:754px;top:592px;color:#8a8a8a;letter-spacing:-0.35px">Vertical Alignment:</div>
<div class="pt" style="left:739px;top:622px;color:#8a8a8a;letter-spacing:-0.35px">Horizontal  Alignment:</div>
<div class="cmb" style="left:857px;top:588px;width:89px;height:21px;line-height:19px;background:#efefef;border-color:#c8c8c8;color:#444">Near</div>
<svg style="left:932px;top:595px" width="9" height="6"><path d="M1 1 L4.5 4.5 L8 1" fill="none" stroke="#b0b0b0" stroke-width="1.2"/></svg>
<div class="cmb" style="left:857px;top:618px;width:89px;height:21px;line-height:19px;background:#efefef;border-color:#c8c8c8;color:#444">Near</div>
<svg style="left:932px;top:625px" width="9" height="6"><path d="M1 1 L4.5 4.5 L8 1" fill="none" stroke="#b0b0b0" stroke-width="1.2"/></svg>
<!-- status bar -->
<div class="a" style="left:2px;top:697px;width:993px;height:38px;background:#f0f3fa"></div>
<svg style="left:8px;top:700px" width="3" height="34"><g fill="#b4b8be"><rect y="0" width="2" height="2"/><rect y="4" width="2" height="2"/><rect y="8" width="2" height="2"/><rect y="12" width="2" height="2"/><rect y="16" width="2" height="2"/><rect y="20" width="2" height="2"/><rect y="24" width="2" height="2"/><rect y="28" width="2" height="2"/><rect y="32" width="2" height="2"/></g></svg>
<div class="a" style="left:15px;top:700px;width:80px;height:33px;background:#87cdec"></div>
<svg style="left:19px;top:705px" width="36" height="28" viewBox="0 0 36 28"><defs><linearGradient id="gf" x1="0" x2="1"><stop offset="0" stop-color="#f8fafc"/><stop offset="0.6" stop-color="#c8dcf4"/><stop offset="0.62" stop-color="#6a9ae8"/><stop offset="1" stop-color="#6a96e4"/></linearGradient></defs><path d="M4 20 L14 26 L14 20 Z" fill="#f0b030" stroke="#5a4a3a" stroke-width="0.8"/><rect x="0.8" y="0.8" width="33" height="19.5" fill="url(#gf)" stroke="#4a4440" stroke-width="1.6"/><g stroke="#2a5aa8" stroke-width="1.2"><line x1="4" y1="5" x2="30" y2="5"/><line x1="4" y1="9.5" x2="19" y2="9.5"/><line x1="4" y1="14" x2="19" y2="14"/></g></svg>
<div class="st" style="left:63px;top:711px;letter-spacing:-0.3px">Front</div>
<div class="a" style="left:99px;top:700px;width:1px;height:34px;background:#a0a4aa"></div>
<svg style="left:107px;top:702px" width="37" height="27" viewBox="0 0 37 27"><defs><linearGradient id="gb" x1="0" x2="0" y1="0" y2="1"><stop offset="0" stop-color="#fbd890"/><stop offset="1" stop-color="#f0a838"/></linearGradient></defs><rect x="0.8" y="7.5" width="30" height="18" fill="url(#gb)" stroke="#c88a28" stroke-width="1"/><g stroke="#a06818" stroke-width="0.9"><line x1="4" y1="12" x2="18" y2="12"/><line x1="4" y1="15.5" x2="18" y2="15.5"/><line x1="4" y1="19" x2="18" y2="19"/></g><path d="M26 7 L35 2 V24 L26 26 Z" fill="#a8d0f4" stroke="#3a6aa8" stroke-width="0.9"/><path d="M28 8 L33 5 V20" stroke="#fff" stroke-width="1" fill="none"/></svg>
<div class="st" style="left:150px;top:711px;letter-spacing:-0.2px">Back</div>
<div class="a" style="left:183px;top:700px;width:1px;height:34px;background:#a0a4aa"></div>
<div class="a" style="left:189px;top:700px;width:1px;height:34px;background:#a0a4aa"></div>
<svg style="left:196px;top:703px" width="39" height="27" viewBox="0 0 39 27"><rect x="8" y="8" width="29.5" height="17.5" fill="#f4b040" stroke="#d08a20" stroke-width="1"/><defs><linearGradient id="gt" x1="0" x2="1" y1="0" y2="1"><stop offset="0" stop-color="#f8f8f8"/><stop offset="1" stop-color="#c4c4c4"/></linearGradient></defs><rect x="0.8" y="1.8" width="29" height="18" fill="url(#gt)" stroke="#7a7a7a" stroke-width="1"/><rect x="1.3" y="2.3" width="28" height="3" fill="#bcd8f4"/><rect x="22" y="2.3" width="7.5" height="3" fill="#5a8ee0"/></svg>
<div class="st" style="left:240px;top:711px;letter-spacing:-0.15px">Templates</div>
<div class="a" style="left:303px;top:700px;width:1px;height:34px;background:#a0a4aa"></div>
<svg style="left:311px;top:703px" width="38" height="27" viewBox="0 0 38 27"><rect x="0.8" y="0.8" width="30" height="19" fill="#f6f6f4" stroke="#8a8a8a" stroke-width="1"/><rect x="1.3" y="1.3" width="29" height="2.5" fill="#f4c040"/><g stroke="#5a86c0" stroke-width="1"><line x1="6" y1="7" x2="26" y2="7"/><line x1="6" y1="10.5" x2="26" y2="10.5"/><line x1="6" y1="14" x2="22" y2="14"/><line x1="6" y1="17" x2="20" y2="17"/></g><g fill="#5a86c0"><rect x="3" y="6.5" width="1" height="1"/><rect x="3" y="10" width="1" height="1"/><rect x="3" y="13.5" width="1" height="1"/></g><circle cx="30" cy="16" r="3.5" fill="#e8b890" stroke="#5a3a20" stroke-width="0.6"/><path d="M30 12 Q26 12.5 26.5 15 Q30 13 33.5 15 Q34 12.5 30 12 Z" fill="#3a2a1a"/><path d="M23 26.5 Q23 20.5 30 20 Q37 20.5 37 26.5 Z" fill="#22346a"/><path d="M29 20.5 H31 L30.6 26 H29.4 Z" fill="#fff"/></svg>
<div class="st" style="left:354px;top:711px;letter-spacing:-0.3px">User Profile</div>
<div class="a" style="left:458px;top:711px;font-size:11.5px;line-height:12px;color:#1a1a1a;letter-spacing:-0.35px;white-space:pre">Share Us On :</div>
<svg style="left:536px;top:708px" width="78" height="17" viewBox="0 0 78 17">
<rect x="0.5" y="0.5" width="16" height="16" fill="#d8402a" stroke="#a02818" stroke-width="0.8"/><text x="6.5" y="13" font-family="Liberation Serif" font-weight="bold" font-size="13" fill="#fff" text-anchor="middle">g</text><path d="M11 3.5 V8.5 M8.5 6 H13.5" stroke="#fff" stroke-width="1.3"/>
<rect x="21" y="0.5" width="16" height="16" fill="#3a5aa0" stroke="#243c78" stroke-width="0.8"/><text x="30" y="15.5" font-family="Liberation Sans" font-weight="bold" font-size="15" fill="#fff" text-anchor="middle">f</text>
<rect x="41" y="0.5" width="16" height="16" fill="#3aa4e4" stroke="#2a78b0" stroke-width="0.8"/><text x="49" y="13.5" font-family="Liberation Sans" font-weight="bold" font-size="13" fill="#fff" text-anchor="middle">t</text>
<rect x="60.5" y="0.5" width="16" height="16" fill="#fff" stroke="#3a5aa0" stroke-width="0.9"/><path d="M63 8 H66 V14.5 H63 Z M66.5 8.5 L70 3 Q72 3 71.5 6 L71 8 H74.5 Q75.5 9 74.5 10 Q75.5 11 74.5 12 Q75 13.5 73.5 14.5 H66.5 Z" fill="#dbe6f6" stroke="#3a5aa0" stroke-width="0.9"/>
</svg>
<!-- feedback banner -->
<div class="a" style="left:652px;top:706px;width:178px;height:21px;border-radius:3px;background:linear-gradient(#fcfcfc,#e4e6ea);border:1px solid #c8cacd;box-shadow:0 1px 1px rgba(0,0,0,0.2)"></div>
<svg style="left:654px;top:708px" width="16" height="15" viewBox="0 0 16 15"><path d="M1 6.5 H4.5 V14 H1 Z M5 7 L8.5 1 Q10.5 1 10 4 L9.5 6.5 H14 Q15.5 7.5 14.5 9 Q15.5 10.5 14 11.5 Q14.5 13.5 12.5 14 H5 Z" fill="#fff" stroke="#1a3a8a" stroke-width="1.2"/></svg>
<div class="a" style="left:669px;top:705px;font-family:'Liberation Mono',monospace;font-weight:bold;font-size:11px;line-height:10px;color:#1a2a8c;letter-spacing:0.87px;white-space:pre">WE ARE GOOD OR BAD?</div>
<div class="a" style="left:688px;top:714px;font-family:'Liberation Mono',monospace;font-weight:bold;font-size:11px;line-height:10px;color:#d01818;letter-spacing:0.3px;white-space:pre">LET OTHERS KNOW...</div>
<svg style="left:812px;top:709px" width="17" height="16" viewBox="0 0 17 16"><path d="M16 8.5 H12.5 V1 H16 Z M12 8 L8.5 14.5 Q6.5 14.5 7 11.5 L7.5 9 H3 Q1.5 8 2.5 6.5 Q1.5 5 3 4 Q2.5 2 4.5 1 H12 Z" fill="#fff" stroke="#d01818" stroke-width="1.3"/></svg>
<!-- bottom banner -->
<svg style="left:381px;top:737px" width="235" height="29" viewBox="0 0 235 29"><defs><linearGradient id="gbn" x1="0" x2="0" y1="0" y2="1"><stop offset="0" stop-color="#e2e2e2"/><stop offset="0.2" stop-color="#c4c4c4"/><stop offset="0.45" stop-color="#8e8f8e"/><stop offset="0.62" stop-color="#767876"/><stop offset="0.8" stop-color="#b8b8b8"/><stop offset="0.92" stop-color="#d0d0d0"/><stop offset="1" stop-color="#9a9a9a"/></linearGradient></defs><path d="M0 0 H235 V16 Q235 29 222 29 H13 Q0 29 0 16 Z" fill="url(#gbn)"/><path d="M0.5 16 Q0.5 28.5 13 28.5 H222 Q234.5 28.5 234.5 16" fill="none" stroke="#505050" stroke-width="1"/></svg>
<div class="a" style="left:300px;top:734px;width:397px;text-align:center;font-family:'Liberation Sans',sans-serif;font-weight:bold;font-size:26px;line-height:28px;color:#050505;white-space:pre;transform:scaleX(0.70);transform-origin:center">Generatebarcode.com</div>
<!-- arrow -->
<svg style="left:490px;top:310px" width="230" height="80" viewBox="0 0 230 80"><line x1="224" y1="8" x2="20" y2="71" stroke="#111" stroke-width="1.2"/><path d="M8 74.5 L23 64 L26 76 Z" fill="#111"/></svg>
<div class="a" style="left:996px;top:0;width:1px;height:737px;background:#3f6f6c"></div>
<div class="a" style="left:0;top:736px;width:997px;height:1px;background:#3f6f6c"></div>
</body></html>
